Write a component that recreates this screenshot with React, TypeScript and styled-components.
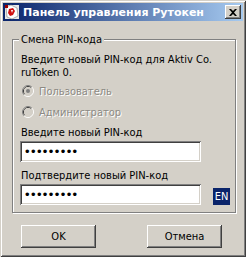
import React from 'react'
import styled, { createGlobalStyle } from 'styled-components'

const GlobalStyle = createGlobalStyle`
  html, body {
    margin: 0;
    padding: 0;
    background: #d4d0c8;
  }
  body {
    font-family: "DejaVu Sans Condensed", "DejaVu Sans", sans-serif;
    font-size: 11px;
  }
`

const FACE = '#d4d0c8'

function AppIcon() {
  return (
    <svg width="16" height="16" viewBox="0 0 16 16">
      <rect x="1" y="1" width="14" height="14" fill="#e8e8e8" />
      <path d="M2 3 L7 1 L13 4 L14 12 L8 15 L3 13 Z" fill="#ffffff" stroke="#808080" strokeWidth="0.6" />
      <path d="M5 5 L9 4 L11 7 L9 11 L6 12 L4 9 Z" fill="#d01010" />
      <path d="M7 6 L9 6 L8 9 Z" fill="#ffffff" />
      <rect x="1" y="1" width="3" height="3" fill="#a00000" />
    </svg>
  )
}

function RadioMark({ checked }: { checked?: boolean }) {
  return (
    <svg width="12" height="12" viewBox="0 0 12 12">
      <path d="M2.11 9.89 A5.5 5.5 0 0 1 9.89 2.11" fill="none" stroke="#808080" strokeWidth="1" />
      <path d="M9.89 2.11 A5.5 5.5 0 0 1 2.11 9.89" fill="none" stroke="#ffffff" strokeWidth="1" />
      <path d="M2.82 9.18 A4.5 4.5 0 0 1 9.18 2.82" fill="none" stroke="#404040" strokeWidth="1" />
      <path d="M9.18 2.82 A4.5 4.5 0 0 1 2.82 9.18" fill="none" stroke={FACE} strokeWidth="1" />
      <circle cx="6" cy="6" r="4" fill={FACE} />
      {checked && <circle cx="6" cy="6" r="2" fill="#808080" />}
    </svg>
  )
}

function CloseGlyph() {
  return (
    <svg width="8" height="7" viewBox="0 0 8 7">
      <path d="M0 0h2l2 2 2-2h2L5 3.5 8 7H6L4 5 2 7H0l3-3.5z" fill="#000" />
    </svg>
  )
}

function App() {
  return (
    <>
      <GlobalStyle />
      <Window>
        <TitleBar>
          <AppIcon />
          <Title>Панель управления Рутокен</Title>
          <CloseButton aria-label="Закрыть">
            <CloseGlyph />
          </CloseButton>
        </TitleBar>
        <Body>
          <GroupBox>
            <Legend>Смена PIN-кода</Legend>
            <Description>
              Введите новый PIN-код для Aktiv Co.
              <br />
              ruToken 0.
            </Description>
            <RadioRow $first>
              <RadioMark checked />
              <DisabledText>Пользователь</DisabledText>
            </RadioRow>
            <RadioRow>
              <RadioMark />
              <DisabledText>Администратор</DisabledText>
            </RadioRow>
            <Label $gap={7}>Введите новый PIN-код</Label>
            <FieldRow>
              <PinInput type="password" defaultValue="123456789" />
            </FieldRow>
            <Label $gap={7}>Подтвердите новый PIN-код</Label>
            <FieldRow>
              <PinInput type="password" defaultValue="123456789" />
              <LangBadge>EN</LangBadge>
            </FieldRow>
          </GroupBox>
          <ButtonRow>
            <Button>OK</Button>
            <Button>Отмена</Button>
          </ButtonRow>
        </Body>
      </Window>
    </>
  )
}

const Window = styled.div`
  width: 246px;
  height: 257px;
  box-sizing: border-box;
  padding: 3px;
  display: flex;
  flex-direction: column;
  background: ${FACE};
  box-shadow:
    inset 1px 1px ${FACE},
    inset -1px -1px #404040,
    inset 2px 2px #ffffff,
    inset -2px -2px #808080;
`

const TitleBar = styled.div`
  height: 18px;
  display: flex;
  align-items: center;
  padding: 0 2px 0 1px;
  background: linear-gradient(to right, #0a246a, #a6caf0);
`

const Title = styled.span`
  flex: 1;
  margin-left: 3px;
  color: #ffffff;
  font-family: "DejaVu Sans", sans-serif;
  font-weight: bold;
  font-size: 11px;
  white-space: nowrap;
`

const CloseButton = styled.button`
  width: 16px;
  height: 14px;
  padding: 0;
  border: none;
  display: flex;
  align-items: center;
  justify-content: center;
  background: ${FACE};
  box-shadow:
    inset -1px -1px #404040,
    inset 1px 1px #ffffff,
    inset -2px -2px #808080,
    inset 2px 2px ${FACE};
`

const Body = styled.div`
  flex: 1;
  display: flex;
  flex-direction: column;
  padding: 0 7px 0 9px;
`

const GroupBox = styled.fieldset`
  margin: 12px 0 0 0;
  padding: 0 8px 7px 8px;
  border: 1px solid #808080;
  box-shadow:
    inset 1px 1px #ffffff,
    1px 1px #ffffff;
  display: flex;
  flex-direction: column;
  align-items: flex-start;
  min-inline-size: 0;
`

const Legend = styled.legend`
  padding: 0 2px;
  margin-left: -2px;
  line-height: 13px;
  background: ${FACE};
  color: #000;
`

const Description = styled.p`
  margin: 7px 0 0 0;
  line-height: 13px;
  color: #000;
`

const RadioRow = styled.div<{ $first?: boolean }>`
  display: flex;
  align-items: center;
  gap: 5px;
  height: 14px;
  margin-top: ${(p) => (p.$first ? 5 : 7)}px;
  margin-left: 1px;
`

const DisabledText = styled.span`
  color: #8c8a84;
  text-shadow: 1px 1px #ffffff;
  line-height: 13px;
`

const Label = styled.div<{ $gap: number }>`
  margin-top: ${(p) => p.$gap}px;
  line-height: 13px;
  color: #000;
`

const FieldRow = styled.div`
  display: flex;
  align-items: flex-end;
  gap: 12px;
  margin-top: 2px;
`

const PinInput = styled.input`
  width: 181px;
  height: 21px;
  margin-left: -1px;
  box-sizing: border-box;
  padding: 0 5px;
  border: none;
  outline: none;
  background: #ffffff;
  font-family: "Liberation Sans", sans-serif;
  font-size: 13px;
  letter-spacing: 1.4px;
  color: #000;
  box-shadow:
    inset 1px 1px #808080,
    inset -1px -1px #ffffff,
    inset 2px 2px #404040,
    inset -2px -2px ${FACE};
`

const LangBadge = styled.div`
  width: 17px;
  height: 17px;
  display: flex;
  align-items: center;
  justify-content: center;
  background: #0a246a;
  color: #ffffff;
  font-size: 11px;
`

const ButtonRow = styled.div`
  display: flex;
  gap: 51px;
  margin-top: 12px;
  padding-left: 9px;
`

const Button = styled.button`
  width: 75px;
  height: 23px;
  padding: 0;
  border: none;
  background: ${FACE};
  font-family: "DejaVu Sans Condensed", "DejaVu Sans", sans-serif;
  font-size: 11px;
  color: #000;
  box-shadow:
    inset -1px -1px #404040,
    inset 1px 1px #ffffff,
    inset -2px -2px #808080,
    inset 2px 2px ${FACE};
`

export default App
